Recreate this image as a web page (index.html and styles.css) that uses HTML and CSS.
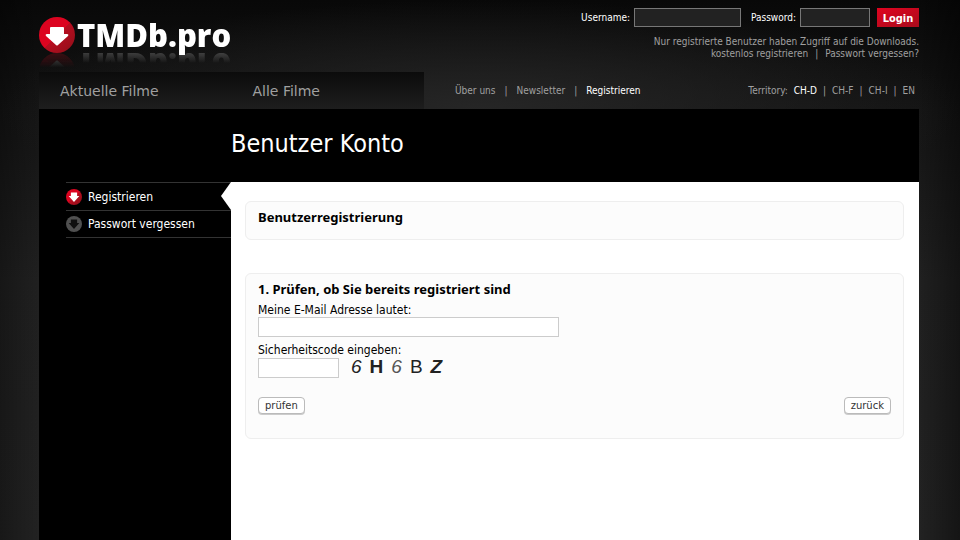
FILE: index.html
```html
<!DOCTYPE html>
<html lang="de">
<head>
    <meta charset="UTF-8">
    <meta name="viewport" content="width=device-width, initial-scale=1.0">
    <title>TMDb.pro - Benutzer Konto</title>
    <link rel="stylesheet" href="styles.css">
</head>
<body>
    <div class="page">
        <header class="header">
            <a class="logo" href="#">
                <svg class="logo-icon" viewBox="0 0 36 36" aria-hidden="true">
                    <defs>
                        <linearGradient id="red" x1="0" y1="0" x2="1" y2="1">
                            <stop offset="0.5" stop-color="#dc0420"/>
                            <stop offset="0.5" stop-color="#b80d20"/>
                            <stop offset="1" stop-color="#8f1019"/>
                        </linearGradient>
                    </defs>
                    <circle cx="18" cy="18" r="18" fill="url(#red)"/>
                    <path d="M12 10H24Q25 10 25 11V17H28Q30 17 29 19L19 28Q18 29 17 28L7 19Q6 17 8 17H11V11Q11 10 12 10Z" fill="#fff"/>
                </svg>
                <span class="logo-text">TMDb.pro</span>
            </a>

            <div class="account">
                <form class="login">
                    <label for="username">Username:</label>
                    <input type="text" id="username" class="login-name">
                    <label for="password">Password:</label>
                    <input type="password" id="password" class="login-pass">
                    <button type="submit">Login</button>
                </form>
                <p>Nur registrierte Benutzer haben Zugriff auf die Downloads.</p>
                <p><a href="#">kostenlos registrieren</a><span class="sep">|</span><a href="#">Passwort vergessen?</a></p>
            </div>
        </header>

        <!-- Navigation -->
        <div class="nav">
            <nav class="main-nav">
                <a href="#">Aktuelle Filme</a>
                <a href="#">Alle Filme</a>
            </nav>
            <nav class="meta-nav">
                <a href="#">Über uns</a>
                <span>|</span>
                <a href="#">Newsletter</a>
                <span>|</span>
                <a href="#" class="active">Registrieren</a>
            </nav>
            <nav class="territory">
                <span>Territory:</span>
                <a href="#" class="active">CH-D</a>
                <span>|</span>
                <a href="#">CH-F</a>
                <span>|</span>
                <a href="#">CH-I</a>
                <span>|</span>
                <a href="#">EN</a>
            </nav>
        </div>

        <div class="title">
            <h1>Benutzer Konto</h1>
        </div>

        <div class="main">
            <nav class="side-nav">
                <a href="#" class="current">
                    <svg viewBox="0 0 36 36" aria-hidden="true">
                        <circle cx="18" cy="18" r="18" fill="url(#red)"/>
                        <path d="M11 8H25V16H30L18 29L6 16H11Z" fill="#fff"/>
                    </svg>
                    Registrieren
                </a>
                <a href="#">
                    <svg viewBox="0 0 36 36" aria-hidden="true">
                        <circle cx="18" cy="18" r="18" fill="#505050"/>
                        <path d="M11 8H25V16H30L18 29L6 16H11Z" fill="#101010"/>
                    </svg>
                    Passwort vergessen
                </a>
            </nav>

            <main class="content">
                <section class="box">
                    <h2>Benutzerregistrierung</h2>
                </section>

                <form class="box">
                    <h2>1. Prüfen, ob Sie bereits registriert sind</h2>
                    <label for="email">Meine E-Mail Adresse lautet:</label>
                    <input type="text" id="email" class="email">
                    <label for="code">Sicherheitscode eingeben:</label>
                    <div class="code-row">
                        <input type="text" id="code" class="code">
                        <div class="captcha">
                            <span class="slant">6</span>
                            <span class="heavy">H</span>
                            <span class="slant thin">6</span>
                            <span>B</span>
                            <span class="heavy slant">Z</span>
                        </div>
                    </div>
                    <div class="buttons">
                        <button type="submit">prüfen</button>
                        <button type="button">zurück</button>
                    </div>
                </form>
            </main>
        </div>
    </div>
</body>
</html>
```
FILE: styles.css
```css
/* General */
* {
    box-sizing: border-box;
}

body {
    margin: 0;
    background: radial-gradient(50% 110px at 50% 110px, #262626, transparent),
                linear-gradient(90deg, rgba(0, 0, 0, 0.3) 0, transparent 39px, transparent calc(100% - 41px), rgba(0, 0, 0, 0.4) 100%),
                linear-gradient(#080808, #141414 110px, #202020 280px, #222);
    font-family: "DejaVu Sans Condensed", "DejaVu Sans", sans-serif;
    font-stretch: condensed;
    font-size: 10px;
    line-height: 12px;
    color: #a0a0a0;
}

a {
    color: inherit;
    text-decoration: none;
}

h1, h2, p {
    margin: 0;
}

input, button {
    font: inherit;
}

.page {
    display: flex;
    flex-direction: column;
    min-height: 100vh;
    padding: 0 41px 0 39px;
}

/* Header */
.header {
    display: flex;
    justify-content: space-between;
    height: 72px;
}

.logo {
    display: flex;
    align-items: flex-start;
    gap: 2px;
    padding-top: 17px;
}

.logo-icon {
    width: 36px;
    height: 36px;
    -webkit-box-reflect: below 0 linear-gradient(transparent 60%, rgba(255, 255, 255, 0.3));
}

.logo-text {
    font-family: "Open Sans", "Noto Sans", sans-serif;
    font-stretch: normal;
    font-size: 31px;
    font-weight: 800;
    line-height: 36px;
    color: #fff;
    -webkit-box-reflect: below -6px linear-gradient(transparent 55%, rgba(255, 255, 255, 0.3));
}

.account {
    padding-top: 8px;
    text-align: right;
}

.login {
    display: flex;
    align-items: center;
    justify-content: flex-end;
    gap: 4px;
    margin-bottom: 9px;
    color: #fff;
}

.login input {
    height: 19px;
    padding: 0 4px;
    border: 1px solid #777;
    background: #222;
    color: #fff;
}

.login .login-name {
    width: 107px;
    margin-right: 6px;
}

.login .login-pass {
    width: 70px;
}

.login button {
    width: 42px;
    height: 19px;
    margin-left: 3px;
    padding: 2px 0 0;
    border: 0;
    background: linear-gradient(160deg, #e00420, #a80c1c);
    color: #fff;
    font-size: 11px;
    font-weight: bold;
}

.sep {
    margin: 0 7px;
}

/* Navigation */
.nav {
    display: flex;
    align-items: center;
    height: 37px;
}

.main-nav {
    display: flex;
    align-self: stretch;
    align-items: center;
    width: 385px;
    background: linear-gradient(#0b0b0b, #1e1e1e);
    font-family: "DejaVu Sans", sans-serif;
    font-size: 14px;
    font-stretch: normal;
}

.main-nav a {
    width: 193px;
    padding-left: 21px;
}

.meta-nav {
    display: flex;
    gap: 9px;
    margin-left: 31px;
}

.territory {
    display: flex;
    gap: 6px;
    margin-left: auto;
    padding-right: 4px;
}

.active {
    color: #fff;
}

/* Page title */
.title {
    padding: 20px 0 23px 192px;
    background: #000;
}

.title h1 {
    color: #fff;
    font-size: 25px;
    font-weight: normal;
    line-height: 30px;
}

.main {
    display: grid;
    grid-template-columns: 192px 1fr;
    flex: 1;
    background: #000;
}

/* Side navigation */
.side-nav {
    padding-left: 27px;
}

.side-nav a {
    position: relative;
    display: flex;
    align-items: center;
    gap: 6px;
    height: 28px;
    border-top: 1px solid #333;
    color: #fff;
    font-size: 12px;
}

.side-nav a:last-child {
    border-bottom: 1px solid #333;
}

.side-nav svg {
    width: 16px;
    height: 16px;
}

/* Pointer of the current entry */
.current::after {
    content: "";
    position: absolute;
    top: -1px;
    right: 0;
    border: solid transparent;
    border-width: 14px 10px 14px 0;
    border-right-color: #fff;
}

/* Content */
.content {
    padding: 19px 15px 19px 14px;
    background: #fff;
    color: #000;
}

.box {
    margin-bottom: 33px;
    padding: 7px 12px 14px;
    border: 1px solid #eee;
    border-radius: 6px;
    background: #fcfcfc;
    font-size: 12px;
}

.box h2 {
    font-family: "Noto Sans", sans-serif;
    font-size: 13px;
    font-stretch: normal;
    line-height: 16px;
}

.box label {
    display: block;
    margin-top: 7px;
    line-height: 13px;
}

.box input {
    display: block;
    height: 20px;
    padding: 0 4px;
    border: 1px solid #ccc;
    background: #fff;
}

.box .email {
    width: 301px;
    max-width: 100%;
}

.box .code {
    width: 81px;
}

.code-row {
    display: flex;
    gap: 12px;
    margin-top: 1px;
}

.captcha {
    display: flex;
    gap: 8px;
    color: #222;
    font-family: "Liberation Sans", sans-serif;
    font-size: 19px;
    font-stretch: normal;
    line-height: 18px;
}

.captcha .slant {
    font-style: italic;
}

.captcha .heavy {
    font-weight: bold;
}

.captcha .thin {
    color: #555;
}

.buttons {
    display: flex;
    justify-content: space-between;
    margin: 19px 0 10px;
}

.buttons button {
    height: 17px;
    padding: 0 6px;
    border: 1px solid #bbb;
    border-radius: 4px;
    background: #fff;
    box-shadow: 0 1px 0 #ccc;
    color: #333;
    font-family: "DejaVu Sans", sans-serif;
    font-size: 10px;
    font-stretch: normal;
    line-height: 15px;
}
```
